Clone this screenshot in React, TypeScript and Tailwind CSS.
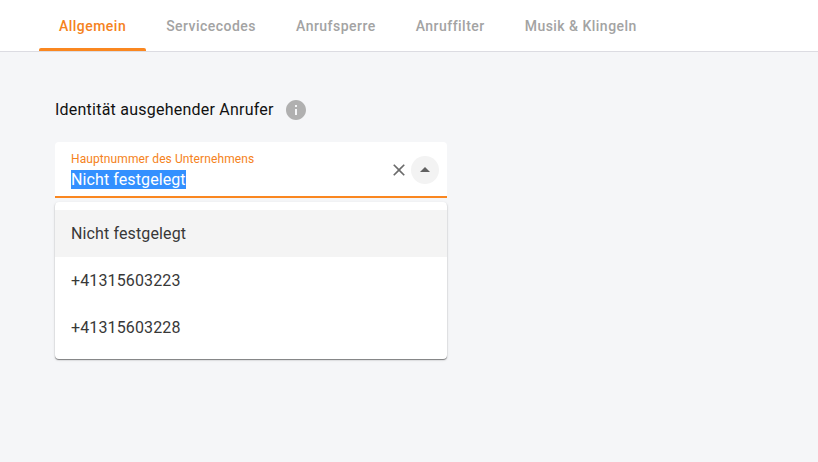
const tabs = [
  { label: 'Allgemein', active: true },
  { label: 'Servicecodes', active: false },
  { label: 'Anrufsperre', active: false },
  { label: 'Anruffilter', active: false },
  { label: 'Musik & Klingeln', active: false },
];

const options = ['Nicht festgelegt', '+41315603223', '+41315603228'];

export default function App() {
  return (
    <div className="min-h-screen bg-[#f5f6f8] font-[Roboto,sans-serif] text-[#212121]">
      <nav className="flex h-[52px] border-b border-[#dcdce2] bg-white pl-[39px]">
        {tabs.map((tab) => (
          <button
            key={tab.label}
            className={`relative h-[51px] px-5 text-sm font-medium tracking-[0.47px] whitespace-nowrap ${
              tab.active ? 'text-[#f58220]' : 'text-[#a3a3a3]'
            }`}
          >
            {tab.label}
            {tab.active && <span className="absolute inset-x-0 bottom-0 h-[3px] rounded-t-[2px] bg-[#fa8720]" />}
          </button>
        ))}
      </nav>
      <main className="pl-[55px] pt-[46px]">
        <div className="flex h-6 items-center gap-2.5">
          <h2 className="text-base tracking-[0.23px] text-[#111]">Identität ausgehender Anrufer</h2>
          <svg className="size-6" viewBox="0 0 24 24" fill="#b0b0b0">
            <path d="M12 2C6.48 2 2 6.48 2 12s4.48 10 10 10 10-4.48 10-10S17.52 2 12 2zm1 15h-2v-6h2v6zm0-8h-2V7h2v2z" />
          </svg>
        </div>
        <div className="mt-5 flex h-14 w-[392px] items-center rounded-t border-b-2 border-[#fa8720] bg-white pl-4 pr-2">
          <div className="flex-1">
            <div className="pt-px text-xs leading-[18px] tracking-[0.1px] text-[#f58220]">Hauptnummer des Unternehmens</div>
            <div className="pt-px text-base leading-[21px] tracking-[0.1px] text-white">
              <span className="bg-[#3390ff]">Nicht festgelegt</span>
            </div>
          </div>
          <svg className="relative top-px size-5" viewBox="0 0 24 24" fill="#6b6b6b">
            <path d="M19 6.41 17.59 5 12 10.59 6.41 5 5 6.41 10.59 12 5 17.59 6.41 19 12 13.41 17.59 19 19 17.59 13.41 12z" />
          </svg>
          <span className="relative top-px ml-0.5 flex size-7 items-center justify-center rounded-full bg-[#f3f3f3]">
            <svg className="size-6" viewBox="0 0 24 24" fill="#616161">
              <path d="m7 14 5-5 5 5z" />
            </svg>
          </span>
        </div>
        <ul className="mt-1 h-[157px] w-[392px] rounded bg-white py-2 shadow-[0_1px_1px_rgba(0,0,0,0.45),0_1px_3px_rgba(0,0,0,0.12)]">
          {options.map((option, i) => (
            <li
              key={option}
              className={`flex h-[47px] items-center px-4 text-base tracking-[0.13px] text-[#383838] ${i === 0 ? 'bg-[#f4f4f4]' : ''}`}
            >
              {option}
            </li>
          ))}
        </ul>
      </main>
    </div>
  );
}
